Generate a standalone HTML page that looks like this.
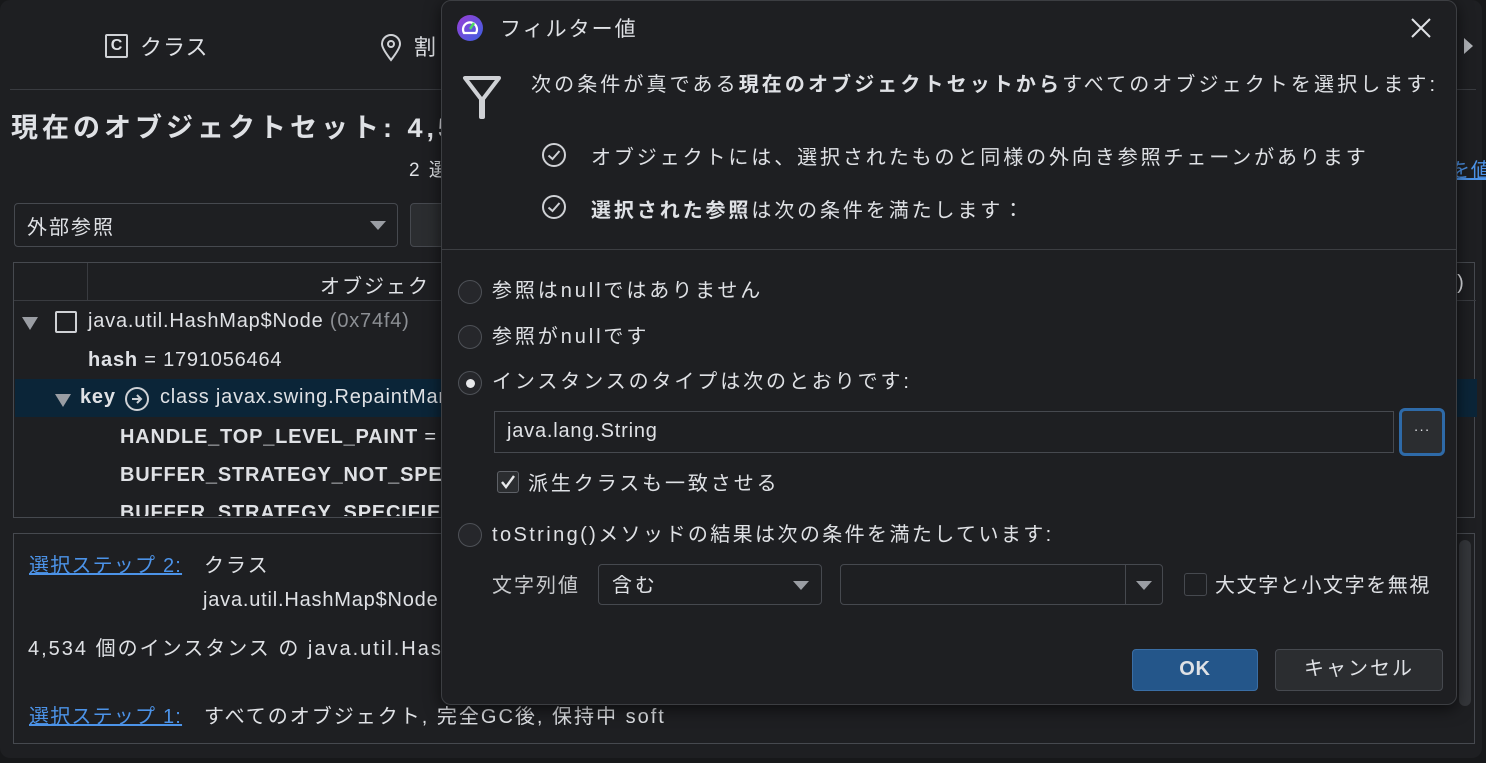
<!DOCTYPE html>
<html><head><meta charset="utf-8"><style>
*{margin:0;padding:0;box-sizing:border-box}
body{width:1486px;height:763px;background:#17181a;overflow:hidden;position:relative;font-family:"Liberation Sans","Noto Sans CJK JP",sans-serif;color:#dfe1e5;font-size:20px;letter-spacing:0.8px}
.a{position:absolute;white-space:nowrap}
.j{letter-spacing:2.9px}
.k{letter-spacing:2px}
.main{position:absolute;left:0;top:0;width:1482px;height:758px;background:#1e1f22;border-radius:10px}
.b{font-weight:bold}
.lnk{color:#4c93e8;text-decoration:underline}
.radio{position:absolute;width:24px;height:24px;border:1.5px solid #4e5157;border-radius:50%;background:#26272b}
.dlg{position:absolute;left:441px;top:0;width:1016px;height:705px;background:#1e1f22;border:1.5px solid #3c3e42;border-radius:10px;box-shadow:0 4px 16px rgba(0,0,0,.6)}
.box{position:absolute;border:1.5px solid #46494f;border-radius:4px;background:#1e1f22}
.tri{position:absolute;width:0;height:0;border-left:8px solid transparent;border-right:8px solid transparent;border-top:9px solid #9a9da3}
</style></head><body>
<div class="main">
 <div class="a" style="left:105px;top:34px;width:23px;height:24px;border:2px solid #cfd1d5;border-radius:2px;font-size:16px;font-weight:bold;text-align:center;line-height:20px;letter-spacing:0">C</div>
 <div class="a" style="left:140px;top:30px;font-size:22px;letter-spacing:1px">クラス</div>
 <svg class="a" style="left:380px;top:34px" width="22" height="28" viewBox="0 0 22 28"><path d="M11 26 C4 17 2 13 2 10 A9 9 0 0 1 20 10 C20 13 18 17 11 26Z" fill="none" stroke="#cfd1d5" stroke-width="2"/><circle cx="11" cy="10" r="3" fill="none" stroke="#cfd1d5" stroke-width="2"/></svg>
 <div class="a" style="left:414px;top:30px;font-size:22px">割</div>
 <div class="a" style="left:1464px;top:38px;width:0;height:0;border-top:8px solid transparent;border-bottom:8px solid transparent;border-left:9px solid #b0b3b8"></div>
 <div class="a" style="left:10px;top:89px;width:1466px;height:1px;background:#393b40"></div>
 <div class="a b" style="left:11px;top:106px;font-size:27px;letter-spacing:4px">現在のオブジェクトセット: 4,5</div>
 <div class="a k" style="left:409px;top:155px;font-size:19px">2 選</div>
 <div class="a lnk" style="left:1450px;top:154px;font-size:20px">を値</div>
 <div class="box" style="left:14px;top:203px;width:384px;height:44px"></div>
 <div class="a k" style="left:27px;top:211px">外部参照</div>
 <div class="tri" style="left:370px;top:221px"></div>
 <div class="box" style="left:410px;top:203px;width:60px;height:44px;background:#2b2d30"></div>
 <div class="a" style="left:13px;top:262px;width:1462px;height:256px;border:1.5px solid #46494f"></div>
 <div class="a" style="left:14px;top:300px;width:1462px;height:1px;background:#393b40"></div>
 <div class="a" style="left:87px;top:263px;width:1px;height:37px;background:#393b40"></div>
 <div class="a k" style="left:320px;top:270px">オブジェク</div>
 <div class="a" style="left:1440px;top:272px">ts)</div>
 <div class="tri" style="left:22px;top:317px;border-top-width:13px"></div>
 <div class="a" style="left:55px;top:311px;width:22px;height:22px;border:2px solid #cfd1d5;border-radius:2px"></div>
 <div class="a" style="left:88px;top:310px">java.util.HashMap$Node <span style="color:#8c8f94">(0x74f4)</span></div>
 <div class="a" style="left:88px;top:349px"><span class="b">hash</span> = 1791056464</div>
 <div class="a" style="left:15px;top:379px;width:1462px;height:38px;background:#0b2538"></div>
 <div class="tri" style="left:55px;top:394px;border-top-width:13px"></div>
 <div class="a b" style="left:80px;top:386px">key</div>
 <svg class="a" style="left:124px;top:386px" width="26" height="26" viewBox="0 0 26 26"><circle cx="13" cy="13" r="11" fill="none" stroke="#cfd1d5" stroke-width="2"/><path d="M8 13h9M13 9l4 4-4 4" fill="none" stroke="#cfd1d5" stroke-width="2"/></svg>
 <div class="a" style="left:160px;top:386px">class javax.swing.RepaintMana</div>
 <div class="a b" style="left:120px;top:426px">HANDLE_TOP_LEVEL_PAINT <span style="font-weight:normal">= tr</span></div>
 <div class="a b" style="left:120px;top:464px">BUFFER_STRATEGY_NOT_SPECI</div>
 <div class="a" style="left:15px;top:500px;width:430px;height:16px;overflow:hidden"><div class="a b" style="left:105px;top:2px">BUFFER_STRATEGY_SPECIFIED_O</div></div>
 <div class="a" style="left:13px;top:533px;width:1462px;height:211px;border:1.5px solid #46494f"></div>
 <div class="a" style="left:1459px;top:540px;width:12px;height:166px;background:#35373b;border-radius:6px"></div>
 <div class="a lnk k" style="left:29px;top:549px;letter-spacing:1.2px">選択ステップ 2:</div>
 <div class="a k" style="left:204px;top:549px">クラス</div>
 <div class="a" style="left:203px;top:589px">java.util.HashMap$Node</div>
 <div class="a k" style="left:28px;top:632px">4,534 個のインスタンス の java.util.HashM</div>
 <div class="a lnk" style="left:29px;top:700px;letter-spacing:1.2px">選択ステップ 1:</div>
 <div class="a k" style="left:204px;top:700px">すべてのオブジェクト, 完全GC後, 保持中 soft</div>
</div>

<div class="dlg">
 <svg class="a" style="left:14px;top:13px" width="28" height="28" viewBox="0 0 28 28"><defs><linearGradient id="g" x1="0" y1="0" x2="1" y2="1"><stop offset="0" stop-color="#9b3fd6"/><stop offset="1" stop-color="#3a5fe0"/></linearGradient></defs><circle cx="14" cy="14" r="13" fill="url(#g)"/><path d="M8 19a7 7 0 1 1 12 0z" fill="none" stroke="#fff" stroke-width="2.2"/><path d="M14 15l4-6" stroke="#4cd964" stroke-width="2.5"/></svg>
 <div class="a j" style="left:58px;top:12px;font-size:21px;letter-spacing:2px">フィルター値</div>
 <svg class="a" style="left:968px;top:16px" width="22" height="22" viewBox="0 0 22 22"><path d="M2 2L20 20M20 2L2 20" stroke="#dfe1e5" stroke-width="2"/></svg>
 <svg class="a" style="left:20px;top:74px" width="40" height="44" viewBox="0 0 40 44"><path d="M3 3H37L21 24V42H19V24Z" fill="none" stroke="#cfd1d5" stroke-width="4" stroke-linejoin="round"/></svg>
 <div class="a j" style="left:89px;top:67px;letter-spacing:3.1px">次の条件が真である<b>現在のオブジェクトセットから</b>すべてのオブジェクトを選択します:</div>
 <svg class="a" style="left:99px;top:141px" width="26" height="26" viewBox="0 0 26 26"><circle cx="13" cy="13" r="11" fill="none" stroke="#cfd1d5" stroke-width="2"/><path d="M7.5 13.5l4 3.5 7-8" fill="none" stroke="#cfd1d5" stroke-width="2"/></svg>
 <div class="a j" style="left:149px;top:140px">オブジェクトには、選択されたものと同様の外向き参照チェーンがあります</div>
 <svg class="a" style="left:99px;top:193px" width="26" height="26" viewBox="0 0 26 26"><circle cx="13" cy="13" r="11" fill="none" stroke="#cfd1d5" stroke-width="2"/><path d="M7.5 13.5l4 3.5 7-8" fill="none" stroke="#cfd1d5" stroke-width="2"/></svg>
 <div class="a j" style="left:149px;top:193px"><b>選択された参照</b>は次の条件を満たします：</div>
 <div class="a" style="left:0;top:248px;width:1014px;height:1px;background:#3c3e42"></div>

 <div class="radio" style="left:16px;top:279px"></div>
 <div class="a j" style="left:50px;top:273px">参照はnullではありません</div>
 <div class="radio" style="left:16px;top:324px"></div>
 <div class="a j" style="left:50px;top:319px">参照がnullです</div>
 <div class="radio" style="left:16px;top:370px"></div>
 <div class="a" style="left:24px;top:378px;width:9px;height:9px;border-radius:50%;background:#e8e9eb"></div>
 <div class="a j" style="left:50px;top:364px">インスタンスのタイプは次のとおりです:</div>
 <div class="a" style="left:52px;top:410px;width:900px;height:42px;border:1.5px solid #46494f"></div>
 <div class="a" style="left:65px;top:419px">java.lang.String</div>
 <div class="a" style="left:957px;top:407px;width:46px;height:48px;border:3px solid #2e6aa8;border-radius:6px;background:#2b2d30;text-align:center;font-size:14px;line-height:36px">···</div>
 <div class="a" style="left:55px;top:470px;width:22px;height:22px;border:1.5px solid #5e6167;border-radius:3px;background:#2b2d30"></div>
 <svg class="a" style="left:58px;top:473px" width="16" height="16" viewBox="0 0 16 16"><path d="M2 8l4 5 8-11" fill="none" stroke="#e8e9eb" stroke-width="2.4"/></svg>
 <div class="a j" style="left:86px;top:466px">派生クラスも一致させる</div>
 <div class="radio" style="left:16px;top:522px"></div>
 <div class="a j" style="left:50px;top:517px;letter-spacing:2.4px">toString()メソッドの結果は次の条件を満たしています:</div>
 <div class="a j" style="left:50px;top:568px;color:#c8cacd;letter-spacing:2px">文字列値</div>
 <div class="box" style="left:156px;top:563px;width:224px;height:41px"></div>
 <div class="a j" style="left:170px;top:568px">含む</div>
 <div class="tri" style="left:351px;top:580px"></div>
 <div class="box" style="left:398px;top:563px;width:323px;height:41px"></div>
 <div class="a" style="left:683px;top:564px;width:1px;height:39px;background:#46494f"></div>
 <div class="tri" style="left:694px;top:580px"></div>
 <div class="a" style="left:742px;top:572px;width:23px;height:23px;border:1.5px solid #46494f;border-radius:3px"></div>
 <div class="a j" style="left:773px;top:568px;letter-spacing:1.6px">大文字と小文字を無視</div>
 <div class="a b" style="left:690px;top:648px;width:126px;height:42px;background:#24568a;border:1.5px solid #3a6ea5;border-radius:4px;text-align:center;line-height:38px">OK</div>
 <div class="a j" style="left:833px;top:648px;width:168px;height:42px;background:#2b2d30;border:1.5px solid #46494f;border-radius:4px;text-align:center;line-height:38px;letter-spacing:2px">キャンセル</div>
</div>
</body></html>
